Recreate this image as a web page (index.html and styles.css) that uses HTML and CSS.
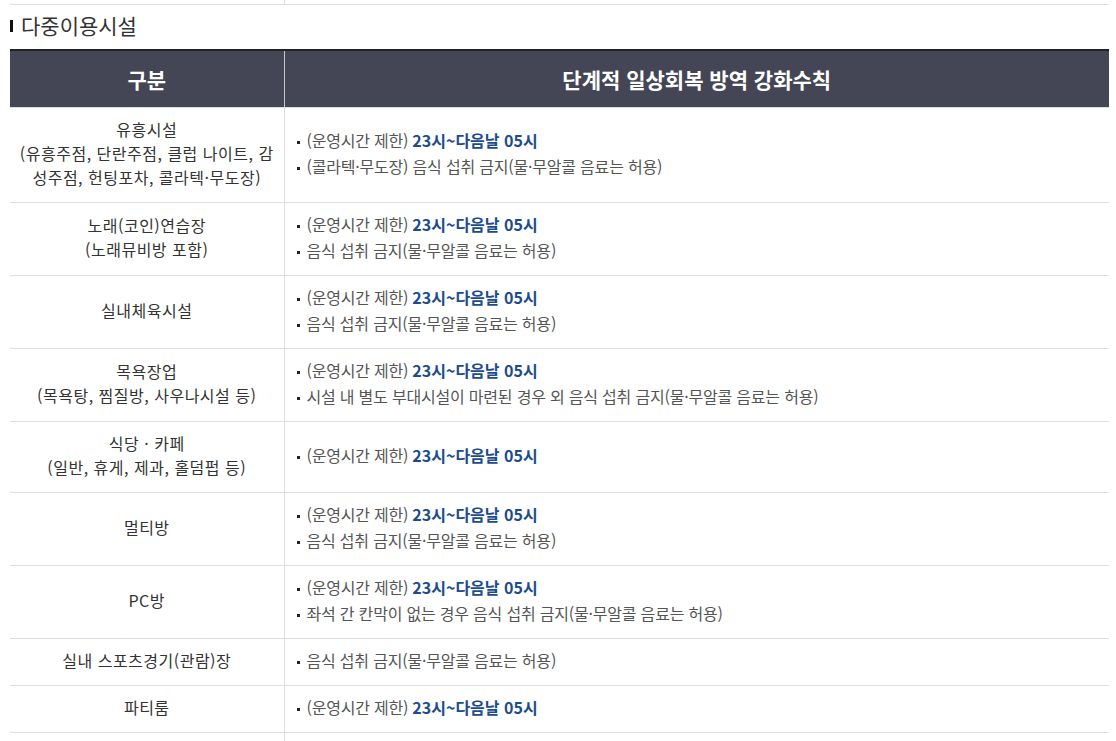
FILE: index.html
```html
<!DOCTYPE html>
<html lang="ko">
<head>
<meta charset="utf-8">
<title>다중이용시설</title>
<link rel="stylesheet" href="styles.css">
</head>
<body>
<div class="page">
  <table class="prev">
    <colgroup><col class="c1"><col class="c2"></colgroup>
    <tr><td></td><td></td></tr>
  </table>
  <h3 class="title">다중이용시설</h3>
  <table class="tbl">
    <colgroup><col class="c1"><col class="c2"></colgroup>
    <thead>
      <tr><th>구분</th><th>단계적 일상회복 방역 강화수칙</th></tr>
    </thead>
    <tbody>
      <tr>
        <td class="name">유흥시설<br>(유흥주점, 단란주점, 클럽 나이트, 감성주점, 헌팅포차, 콜라텍·무도장)</td>
        <td class="rules"><ul>
          <li>(운영시간 제한) <strong>23시~다음날 05시</strong></li>
          <li>(콜라텍·무도장) 음식 섭취 금지(물·무알콜 음료는 허용)</li>
        </ul></td>
      </tr>
      <tr>
        <td class="name">노래(코인)연습장<br>(노래뮤비방 포함)</td>
        <td class="rules"><ul>
          <li>(운영시간 제한) <strong>23시~다음날 05시</strong></li>
          <li>음식 섭취 금지(물·무알콜 음료는 허용)</li>
        </ul></td>
      </tr>
      <tr>
        <td class="name">실내체육시설</td>
        <td class="rules"><ul>
          <li>(운영시간 제한) <strong>23시~다음날 05시</strong></li>
          <li>음식 섭취 금지(물·무알콜 음료는 허용)</li>
        </ul></td>
      </tr>
      <tr>
        <td class="name">목욕장업<br>(목욕탕, 찜질방, 사우나시설 등)</td>
        <td class="rules"><ul>
          <li>(운영시간 제한) <strong>23시~다음날 05시</strong></li>
          <li>시설 내 별도 부대시설이 마련된 경우 외 음식 섭취 금지(물·무알콜 음료는 허용)</li>
        </ul></td>
      </tr>
      <tr>
        <td class="name">식당 · 카페<br>(일반, 휴게, 제과, 홀덤펍 등)</td>
        <td class="rules"><ul>
          <li>(운영시간 제한) <strong>23시~다음날 05시</strong></li>
        </ul></td>
      </tr>
      <tr>
        <td class="name">멀티방</td>
        <td class="rules"><ul>
          <li>(운영시간 제한) <strong>23시~다음날 05시</strong></li>
          <li>음식 섭취 금지(물·무알콜 음료는 허용)</li>
        </ul></td>
      </tr>
      <tr>
        <td class="name">PC방</td>
        <td class="rules"><ul>
          <li>(운영시간 제한) <strong>23시~다음날 05시</strong></li>
          <li>좌석 간 칸막이 없는 경우 음식 섭취 금지(물·무알콜 음료는 허용)</li>
        </ul></td>
      </tr>
      <tr>
        <td class="name">실내 스포츠경기(관람)장</td>
        <td class="rules"><ul>
          <li>음식 섭취 금지(물·무알콜 음료는 허용)</li>
        </ul></td>
      </tr>
      <tr>
        <td class="name">파티룸</td>
        <td class="rules"><ul>
          <li>(운영시간 제한) <strong>23시~다음날 05시</strong></li>
        </ul></td>
      </tr>
      <tr>
        <td class="name">&nbsp;</td>
        <td class="rules"></td>
      </tr>
    </tbody>
  </table>
</div>
</body>
</html>
```

FILE: styles.css
```css
html, body {
  margin: 0;
  padding: 0;
  background: #fff;
}
body {
  font-family: "Noto Sans CJK KR", "Noto Sans", sans-serif;
  color: #333;
  overflow: hidden;
  height: 741px;
}
.page {
  padding: 0 7px 0 10px;
}
table {
  width: 100%;
  border-collapse: collapse;
  table-layout: fixed;
}
.c1 { width: 274px; }
.prev td {
  height: 4px;
  padding: 0;
  border-bottom: 1px solid #ddd;
}
.prev td + td {
  border-left: 1px solid #ddd;
}
.title {
  margin: 0 0 9px 0;
  padding: 5px 0 0 0;
  height: 35px;
  box-sizing: border-box;
  font-size: 21px;
  font-weight: 400;
  line-height: 28px;
  color: #333;
  display: flex;
  align-items: center;
  gap: 8px;
}
.title::before {
  content: "";
  display: block;
  width: 3px;
  height: 12px;
  margin-top: 2px;
  background: #111;
}
.tbl thead tr {
  border-top: 2px solid #222;
}
.tbl th {
  background: #444655;
  color: #fff;
  font-size: 21px;
  font-weight: 700;
  height: 56px;
  padding: 0;
  text-align: center;
  border-bottom: 1px solid #ddd;
}
.tbl th + th {
  border-left: 1px solid #c8c8cc;
}
.tbl td {
  border-bottom: 1px solid #ddd;
  padding: 9px 12px 13px;
  font-size: 16px;
  line-height: 24px;
  vertical-align: middle;
}
.tbl td + td {
  border-left: 1px solid #ddd;
}
.tbl td.name {
  text-align: center;
  color: #333;
  letter-spacing: 0.5px;
  padding-left: 8px;
  padding-right: 8px;
}
.rules {
  color: #555;
}
.rules ul {
  list-style: none;
  margin: 0;
  padding: 0;
  display: flex;
  flex-direction: column;
  gap: 2px;
}
.rules li {
  display: flex;
  align-items: center;
  gap: 7px;
  font-size: 16px;
  letter-spacing: -0.2px;
}
.rules li::before {
  content: "";
  width: 3px;
  height: 3px;
  background: #222;
  flex: none;
  margin-top: 4px;
}
.rules strong {
  color: #1d4c8e;
  font-weight: 700;
  font-size: 16px;
  margin-left: -3px;
  letter-spacing: 0;
}
```
